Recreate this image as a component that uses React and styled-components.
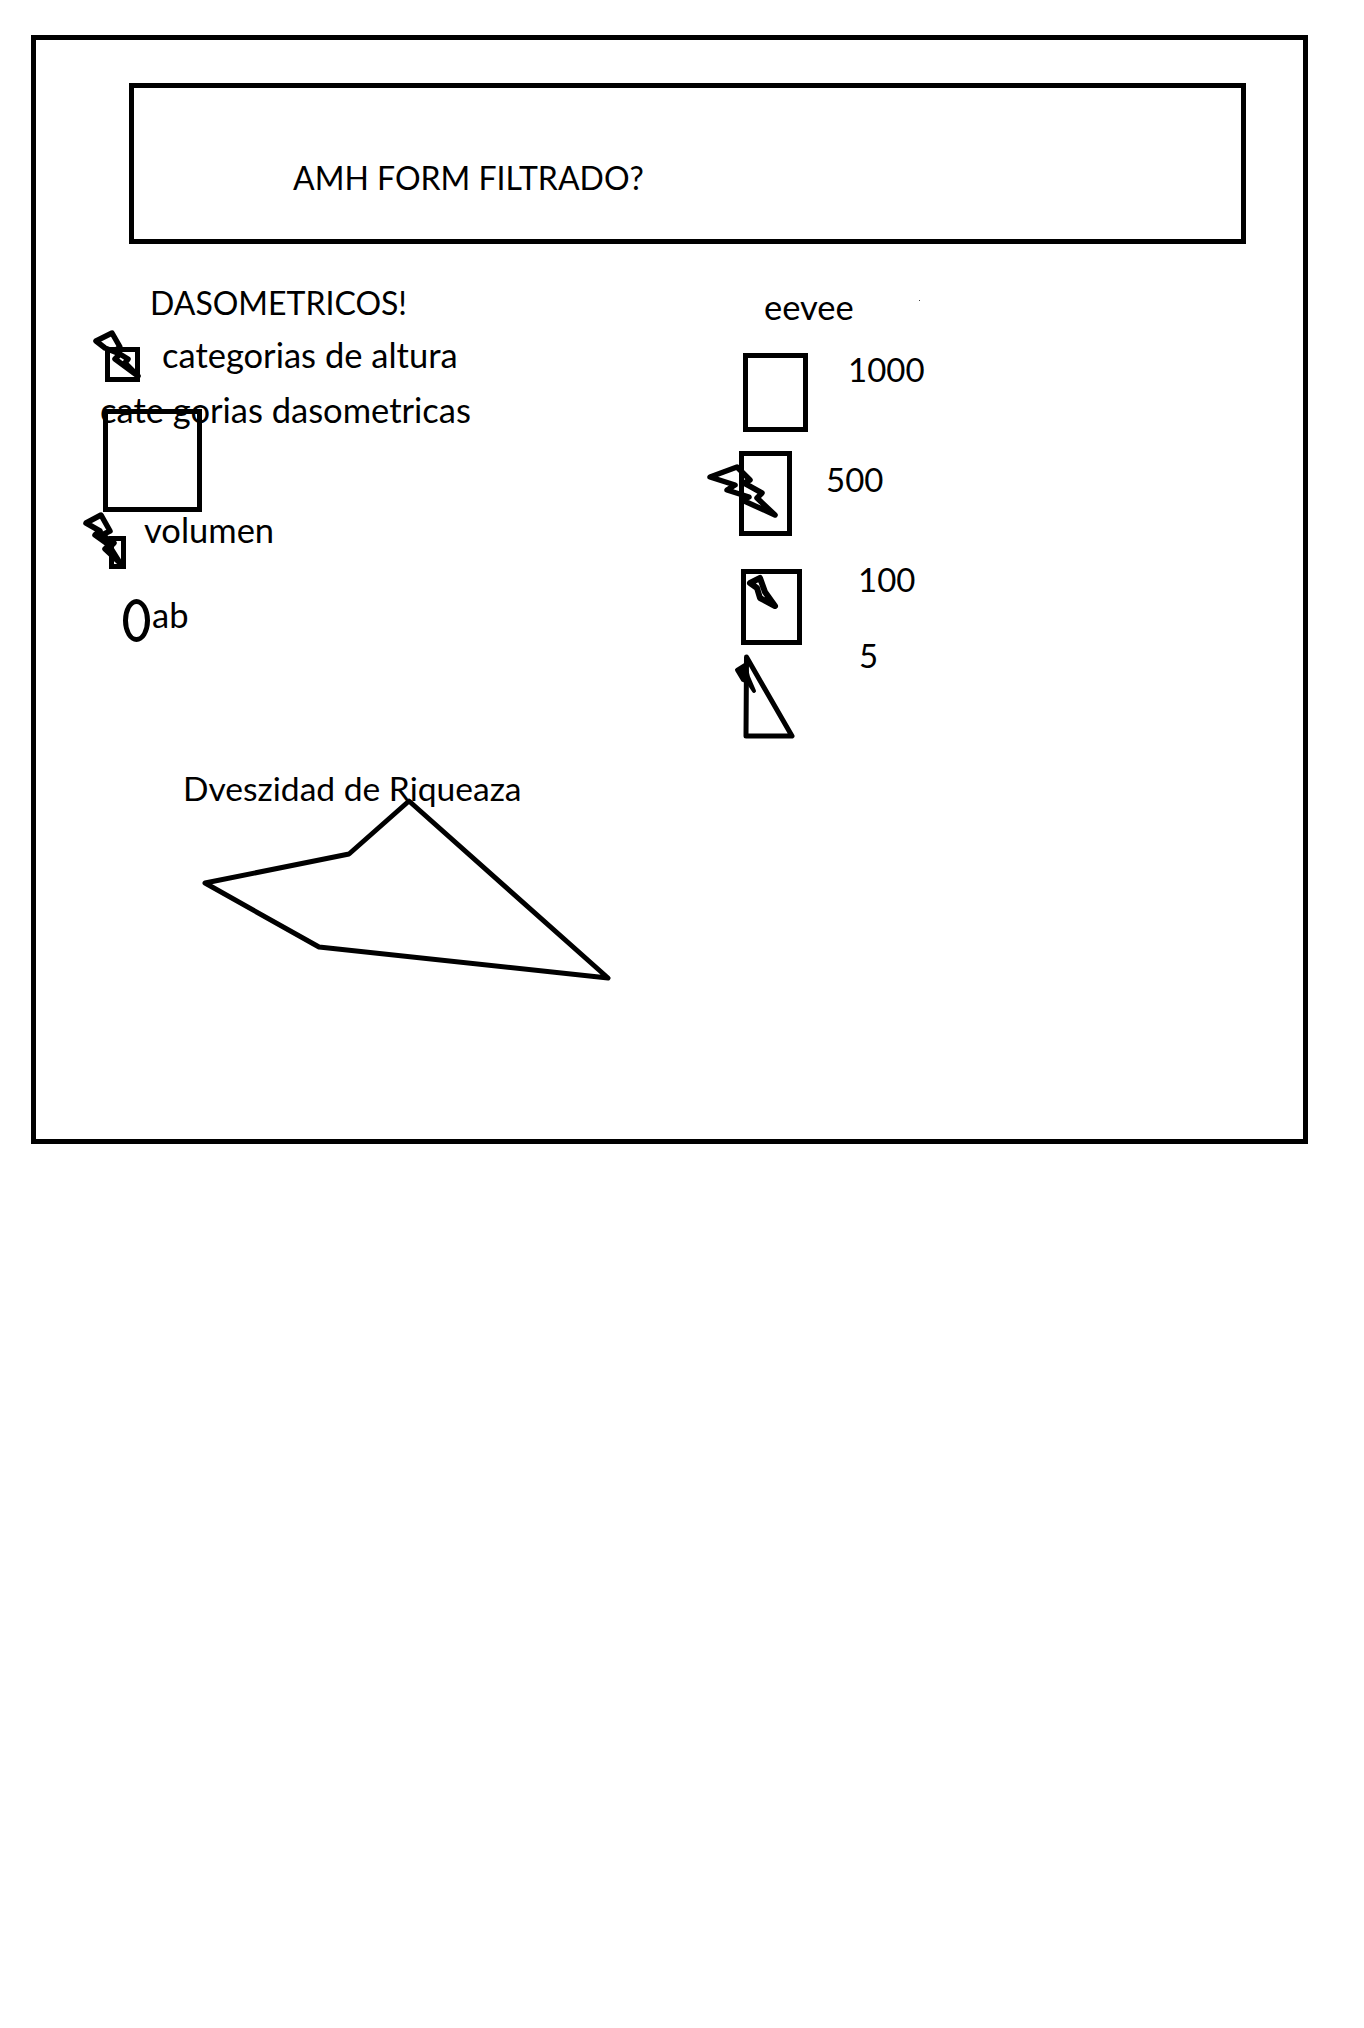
import styled, { createGlobalStyle } from 'styled-components'

const GlobalStyle = createGlobalStyle`
  html, body {
    margin: 0;
    background: #fff;
  }
  body {
    font-family: Lato, "Open Sans", sans-serif;
    font-size: 34.5px;
    line-height: 40px;
    color: #000;
  }
`

const Page = styled.div`
  height: 2028px;
  padding: 35px 0 0 31px;
  box-sizing: border-box;
`

const Frame = styled.div`
  width: 1277px;
  height: 1109px;
  padding-top: 43px;
  box-sizing: border-box;
  border: 5px solid #000;
`

const Header = styled.header`
  display: flex;
  align-items: center;
  width: 1117px;
  height: 161px;
  margin-left: 93px;
  padding: 29px 0 0 159px;
  box-sizing: border-box;
  border: 5px solid #000;
  font-size: 32px;
`

const Columns = styled.div`
  display: grid;
  grid-template-columns: 703px 1fr;
`

const Column = styled.section`
  display: flex;
  flex-direction: column;
  align-items: flex-start;
`

const Label = styled.span`
  position: relative;
  display: block;
  white-space: nowrap;
  margin-top: ${p => p.$top || 0}px;
  margin-left: ${p => p.$left || 0}px;
`

const Title = styled(Label)`
  font-size: 32px;
`

const Value = styled(Label)`
  font-size: 33px;
`

const ChartTitle = styled(Label)`
  font-size: 33.6px;
`

const Row = styled.div`
  display: flex;
  align-items: flex-start;
  margin-top: ${p => p.$top || 0}px;
  margin-left: ${p => p.$left || 0}px;
`

const Box = styled.div`
  position: relative;
  flex: none;
  width: ${p => p.$w}px;
  height: ${p => p.$h}px;
  margin-top: ${p => p.$top || 0}px;
  margin-left: ${p => p.$left || 0}px;
  box-sizing: border-box;
  border: 5px solid #000;
`

const Oval = styled.div`
  flex: none;
  width: 27px;
  height: 43px;
  margin-top: 4px;
  box-sizing: border-box;
  border: 5px solid #000;
  border-radius: 50%;
`

const Sketch = styled.svg`
  display: block;
  flex: none;
  overflow: visible;
  margin-top: ${p => p.$top || 0}px;
  margin-left: ${p => p.$left || 0}px;
`

const BoltSvg = styled.svg`
  position: absolute;
  left: ${p => p.$x}px;
  top: ${p => p.$y}px;
  overflow: visible;
`

const Dot = styled.i`
  position: absolute;
  left: 155px;
  top: 13px;
  width: 1px;
  height: 1px;
  background: #444;
`

const Bolt = ({ x, y, w, h, points, stroke = 5.5 }) => (
  <BoltSvg $x={x} $y={y} width={w} height={h} viewBox={`0 0 ${w} ${h}`}>
    <polygon points={points} fill="none" stroke="#000" strokeWidth={stroke} strokeLinejoin="round" />
  </BoltSvg>
)

export default function App() {
  return (
    <Page>
      <GlobalStyle />
      <Frame>
        <Header>AMH FORM FILTRADO?</Header>
        <Columns>
          <Column>
            <Title $top={39} $left={114}>DASOMETRICOS!</Title>
            <Row $top={12} $left={69}>
              <Box $w={35} $h={35} $top={12}>
                <Bolt x={-19} y={-26} w={50} h={54} points="5,15 21,7 29,21 24,25 37,33 34,37 47,50 24,33 29,28 14,22" />
              </Box>
              <Label $left={22}>categorias de altura</Label>
            </Row>
            <Label $top={8} $left={64}>cate gorias dasometricas</Label>
            <Box $w={99} $h={103} $top={-21} $left={67} />
            <Row $top={-2} $left={73}>
              <Box $w={17} $h={33} $top={26}>
                <Bolt x={-35} y={-33} w={44} h={58} points="7,15 22,7 31,23 23,27 35,35 31,39 41,55 26,41 30,37 16,27 21,23" />
              </Box>
              <Label $left={18}>volumen</Label>
            </Row>
            <Row $top={26} $left={87}>
              <Oval />
              <Label $left={2}>ab</Label>
            </Row>
            <ChartTitle $top={126} $left={147}>Dveszidad de Riqueaza</ChartTitle>
            <Sketch $top={-11} $left={166} width="410" height="185" viewBox="0 0 410 185">
              <polygon points="207,4 406,181 117,150 3,86 147,57" fill="none" stroke="#000" strokeWidth="5" strokeLinejoin="round" />
            </Sketch>
          </Column>
          <Column>
            <Label $top={43} $left={25}>eevee<Dot /></Label>
            <Row $top={22}>
              <Box $w={65} $h={79} $top={4} $left={4} />
              <Value $left={40}>1000</Value>
            </Row>
            <Row $top={19}>
              <Box $w={53} $h={85}>
                <Bolt x={-36} y={9} w={73} h={53} points="2,12 29,2 42,15 36,18 54,28 49,33 67,50 34,35 41,32 19,25 27,20" />
              </Box>
              <Value $top={8} $left={34}>500</Value>
            </Row>
            <Row $top={23}>
              <Box $w={61} $h={76} $top={10} $left={2}>
                <Bolt x={2} y={2} w={29} h={32} points="2,7 12,2 17,16 27,30 12,22 9,12" stroke={6} />
              </Box>
              <Value $left={56}>100</Value>
            </Row>
            <Row $top={-10}>
              <Sketch $top={20} $left={5} width="50" height="83" viewBox="0 0 50 83">
                <polygon points="2.5,2 48,81 2,81" fill="none" stroke="#000" strokeWidth="5" strokeLinejoin="round" />
                <polygon points="-7,15 1,10 4,22 10,36 4,27 -1,25" fill="#000" stroke="#000" strokeWidth="4" strokeLinejoin="round" />
              </Sketch>
              <Value $left={65}>5</Value>
            </Row>
          </Column>
        </Columns>
      </Frame>
    </Page>
  )
}
